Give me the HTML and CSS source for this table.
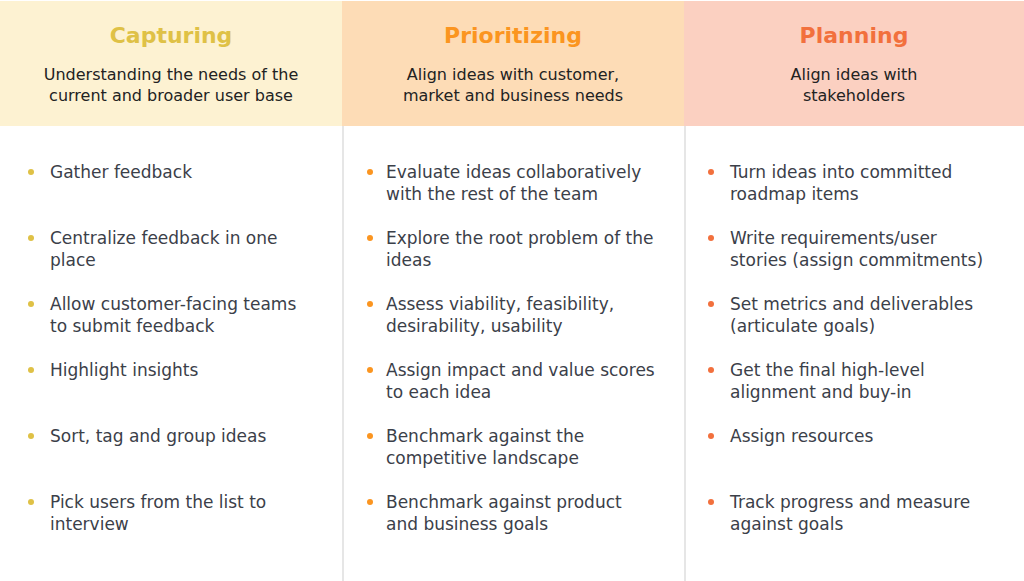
FILE: index.html
```html
<!DOCTYPE html>
<html lang="en">
<head>
<meta charset="utf-8">
<title>Capturing, Prioritizing, Planning</title>
<link rel="stylesheet" href="styles.css">
</head>
<body>
<div class="board">
  <section class="col col-capture">
    <header class="head">
      <h2 class="title">Capturing</h2>
      <p class="sub">Understanding the needs of the<br>current and broader user base</p>
    </header>
    <ul class="list">
      <li>Gather feedback</li>
      <li>Centralize feedback in one<br>place</li>
      <li>Allow customer-facing teams<br>to submit feedback</li>
      <li>Highlight insights</li>
      <li>Sort, tag and group ideas</li>
      <li>Pick users from the list to<br>interview</li>
    </ul>
  </section>
  <section class="col col-prior">
    <header class="head">
      <h2 class="title">Prioritizing</h2>
      <p class="sub">Align ideas with customer,<br>market and business needs</p>
    </header>
    <ul class="list">
      <li>Evaluate ideas collaboratively<br>with the rest of the team</li>
      <li>Explore the root problem of the<br>ideas</li>
      <li>Assess viability, feasibility,<br>desirability, usability</li>
      <li>Assign impact and value scores<br>to each idea</li>
      <li>Benchmark against the<br>competitive landscape</li>
      <li>Benchmark against product<br>and business goals</li>
    </ul>
  </section>
  <section class="col col-plan">
    <header class="head">
      <h2 class="title">Planning</h2>
      <p class="sub">Align ideas with<br>stakeholders</p>
    </header>
    <ul class="list">
      <li>Turn ideas into committed<br>roadmap items</li>
      <li>Write requirements/user<br>stories (assign commitments)</li>
      <li>Set metrics and deliverables<br>(articulate goals)</li>
      <li>Get the final high-level<br>alignment and buy-in</li>
      <li>Assign resources</li>
      <li>Track progress and measure<br>against goals</li>
    </ul>
  </section>
</div>
</body>
</html>
```
FILE: styles.css
```css
* { box-sizing: border-box; }
html, body { margin: 0; padding: 0; background: #fff; }
body {
  font-family: "DejaVu Sans", "Liberation Sans", sans-serif;
  width: 1024px;
  height: 581px;
  overflow: hidden;
}
.board {
  display: grid;
  grid-template-columns: 342px 342px 340px;
  height: 581px;
  padding-top: 1px;
}
.col {
  display: flex;
  flex-direction: column;
}
.col-prior, .col-plan {
  border-left: 2px solid #e6e6e6;
}
.head {
  height: 125px;
  display: flex;
  flex-direction: column;
  align-items: center;
  padding-top: 18px;
  text-align: center;
}
.col-prior .head, .col-plan .head { margin-left: -2px; }
.col-capture .head { background: #fdf2d2; }
.col-prior .head { background: #fddcb6; }
.col-plan .head { background: #fbd0c1; }
.title {
  margin: 0;
  font-size: 22px;
  line-height: 34px;
  font-weight: 700;
}
.col-capture .title { color: #dfc146; }
.col-prior .title { color: #fb9520; }
.col-plan .title { color: #f2703d; }
.sub {
  margin: 11px 0 0;
  font-size: 16px;
  line-height: 21px;
  color: #222;
}
.list {
  list-style: none;
  margin: 0;
  padding: 35px 0 0;
  font-size: 17px;
  line-height: 22px;
  color: #3b4049;
}
.list li {
  display: flex;
  height: 66px;
}
.list li::before {
  content: "";
  flex: none;
  width: 6px;
  height: 6px;
  border-radius: 50%;
  margin-top: 8px;
}
.col-capture .list { padding-left: 28px; }
.col-capture .list li::before { background: #dfc146; margin-right: 16px; }
.col-prior .list { padding-left: 23px; }
.col-prior .list li::before { background: #fb9520; margin-right: 13px; }
.col-plan .list { padding-left: 22px; }
.col-plan .list li::before { background: #f2703d; margin-right: 16px; }
```
